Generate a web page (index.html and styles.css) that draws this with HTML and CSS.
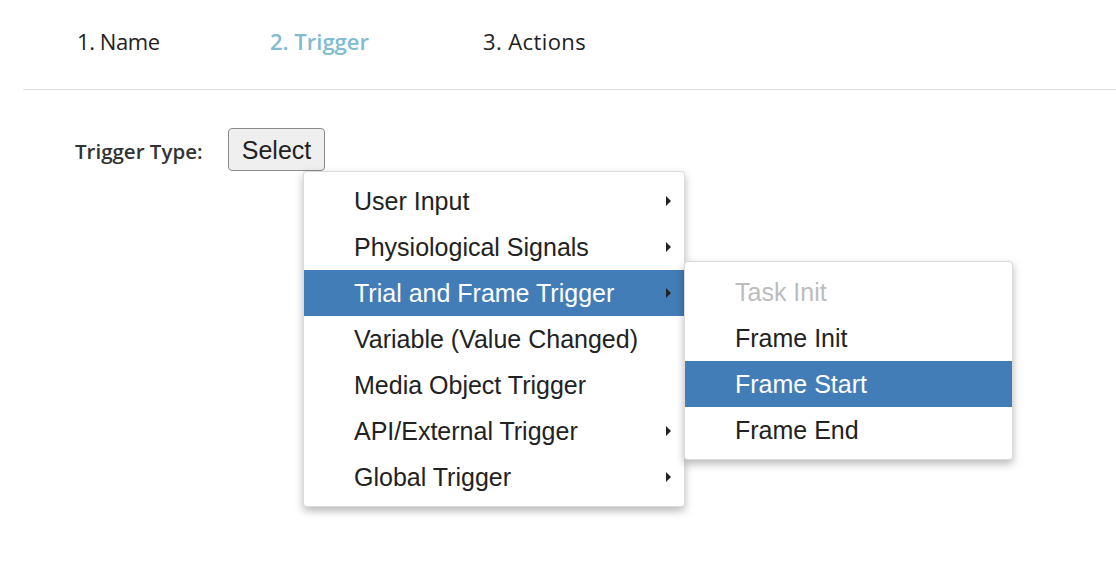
FILE: index.html
```html
<!DOCTYPE html>
<html>
<head>
<meta charset="utf-8">
<link rel="stylesheet" href="styles.css">
</head>
<body>
<nav class="steps">
  <div class="step">1. Name</div>
  <div class="step active">2. Trigger</div>
  <div class="step wide">3. Actions</div>
</nav>
<div class="rule"></div>
<div class="trigger-row">
  <span class="label">Trigger Type:</span>
  <div class="select-wrap">
    <button class="select-btn">Select</button>
    <ul class="menu main-menu">
      <li class="item has-sub">User Input</li>
      <li class="item has-sub">Physiological Signals</li>
      <li class="item has-sub selected">Trial and Frame Trigger
        <ul class="menu sub-menu">
          <li class="item disabled">Task Init</li>
          <li class="item">Frame Init</li>
          <li class="item selected">Frame Start</li>
          <li class="item">Frame End</li>
        </ul>
      </li>
      <li class="item">Variable (Value Changed)</li>
      <li class="item">Media Object Trigger</li>
      <li class="item has-sub">API/External Trigger</li>
      <li class="item has-sub">Global Trigger</li>
    </ul>
  </div>
</div>
</body>
</html>
```
FILE: styles.css
```css
html, body {
  margin: 0;
  padding: 0;
  background: #fff;
}
body {
  font-family: "Open Sans", "Liberation Sans", sans-serif;
  color: #333;
  min-height: 566px;
}
.steps {
  display: grid;
  grid-template-columns: 193px 213px auto;
  padding: 25px 0 0 77px;
  height: 63px;
  box-sizing: border-box;
}
.step {
  font-size: 22px;
  letter-spacing: -0.4px;
  line-height: 32px;
  color: #222;
}
.step.wide {
  letter-spacing: 0.4px;
}
.step.active {
  color: #80bbd0;
  font-weight: 600;
  letter-spacing: 0;
}
.rule {
  margin-left: 23px;
  height: 1px;
  background: #e2e2e2;
  margin-top: 26px;
}
.trigger-row {
  display: flex;
  align-items: center;
  padding: 38px 0 0 75px;
}
.label {
  font-size: 20.5px;
  font-weight: 600;
  color: #333;
  width: 153px;
  padding-top: 2px;
}
.select-wrap {
  position: relative;
}
.select-btn {
  font-family: "Liberation Sans", Arial, sans-serif;
  font-size: 25px;
  color: #222;
  background: #efefef;
  border: 1px solid #8a8a8a;
  border-radius: 4px;
  height: 43px;
  width: 97px;
  padding: 0;
  line-height: 43px;
}
.menu {
  list-style: none;
  margin: 0;
  padding: 6px 0 6px;
  background: #fff;
  border: 1px solid rgba(0,0,0,0.14);
  border-radius: 4px;
  box-shadow: 0 4px 8px rgba(0,0,0,0.28);
  font-family: "Liberation Sans", Arial, sans-serif;
  font-size: 25px;
  color: #222;
  position: absolute;
}
.main-menu {
  left: 75px;
  top: 43px;
  width: 380px;
  z-index: 2;
}
.sub-menu {
  left: 380px;
  top: -9px;
  width: 327px;
  padding: 7px 0 6px;
  z-index: 3;
}
.item {
  position: relative;
  height: 46px;
  line-height: 46px;
  padding-left: 50px;
  white-space: nowrap;
}
.item.selected {
  background: #427db8;
  color: #fff;
}
.item.disabled {
  color: #bcbcbc;
}
.item.has-sub::after {
  content: "";
  position: absolute;
  right: 13px;
  top: 18px;
  border-style: solid;
  border-width: 5px 0 5px 5px;
  border-color: transparent transparent transparent #222;
}
```
